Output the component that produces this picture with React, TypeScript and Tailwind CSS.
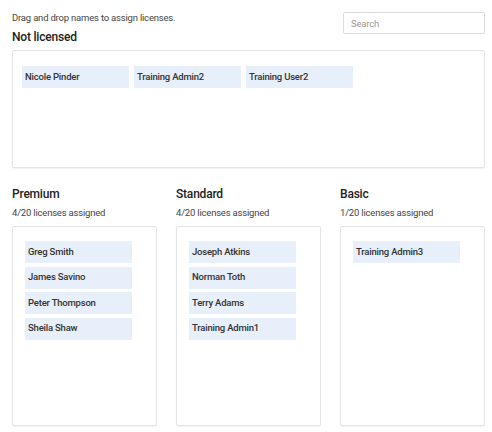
const unlicensed = ['Nicole Pinder', 'Training Admin2', 'Training User2']

const tiers = [
  { name: 'Premium', assigned: 4, users: ['Greg Smith', 'James Savino', 'Peter Thompson', 'Sheila Shaw'] },
  { name: 'Standard', assigned: 4, users: ['Joseph Atkins', 'Norman Toth', 'Terry Adams', 'Training Admin1'] },
  { name: 'Basic', assigned: 1, users: ['Training Admin3'] },
]

function NameChip({ name }: { name: string }) {
  return (
    <div className="flex h-[22px] w-[107px] items-center bg-[#e7effa] pl-[3px] text-[9.5px] font-medium tracking-[-0.2px] text-[#333]">
      {name}
    </div>
  )
}

export default function App() {
  return (
    <div
      className="min-h-[432px] w-[492px] bg-white pl-3 pr-[7px] pt-[11px] text-[#333]"
      style={{ fontFamily: 'Roboto, "Liberation Sans", sans-serif' }}
    >
      <div className="flex justify-between">
        <div>
          <p className="text-[9.5px] leading-[14px] tracking-[-0.2px] text-[#444]">
            Drag and drop names to assign licenses.
          </p>
          <h2 className="mt-[3px] text-[12px] font-medium leading-[18px] tracking-[-0.2px] text-[#222]">
            Not licensed
          </h2>
        </div>
        <input
          placeholder="Search"
          className="mt-px h-[22px] w-[142px] rounded-[2px] border border-[#dcdcdc] px-[7px] text-[9.5px] tracking-[-0.2px] text-[#333] outline-none placeholder:text-[#9a9a9a]"
        />
      </div>

      {/* Unassigned users */}
      <div className="mt-[4px] flex h-[118px] items-start gap-[5px] rounded-[2px] border border-[#e4e4e4] px-[9px] pt-[15px] shadow-[0_1px_2px_rgba(0,0,0,0.06)]">
        {unlicensed.map((name) => (
          <NameChip key={name} name={name} />
        ))}
      </div>

      <div className="mt-[17px] grid grid-cols-3 gap-[19px]">
        {tiers.map((tier) => (
          <div key={tier.name}>
            <h2 className="text-[12px] font-medium leading-[18px] tracking-[-0.2px] text-[#222]">{tier.name}</h2>
            <p className="mt-[3px] text-[9.5px] leading-[14px] tracking-[-0.2px] text-[#444]">
              {tier.assigned}/20 licenses assigned
            </p>
            <div className="mt-[6px] flex h-[200px] flex-col gap-[3.5px] rounded-[2px] border border-[#e4e4e4] pl-[12px] pt-[14px] shadow-[0_1px_2px_rgba(0,0,0,0.06)]">
              {tier.users.map((name) => (
                <NameChip key={name} name={name} />
              ))}
            </div>
          </div>
        ))}
      </div>
    </div>
  )
}
